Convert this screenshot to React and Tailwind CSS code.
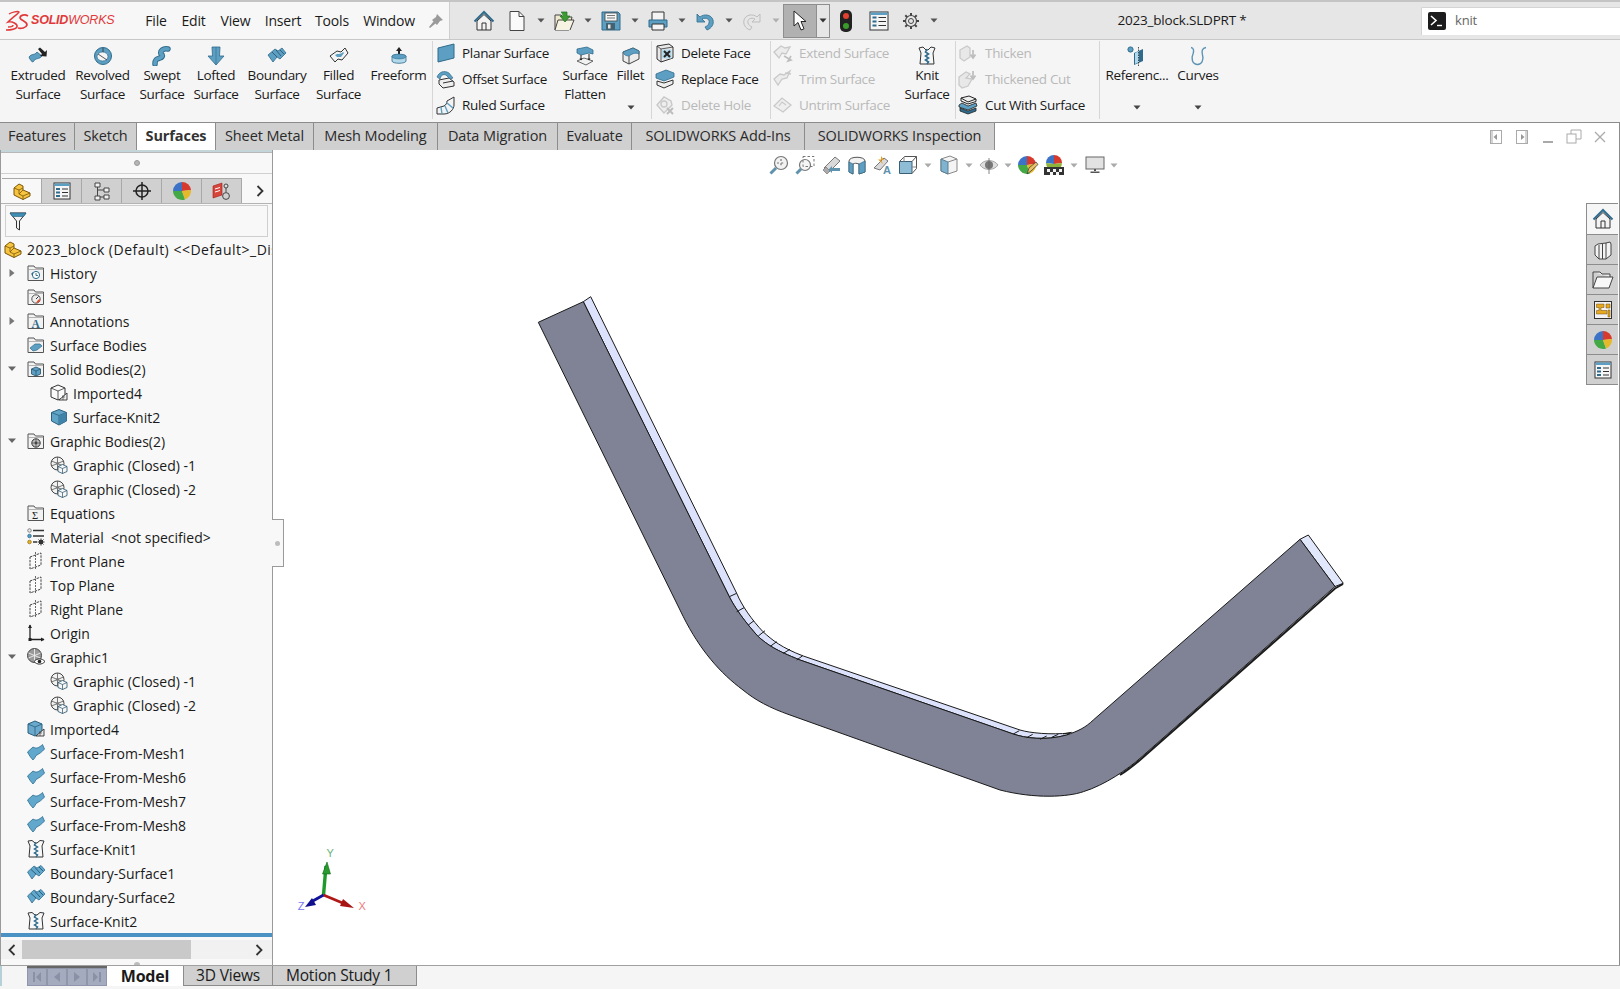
import React from "react";

const S = ({ w = 20, h = 20, children }) => (
  <svg width={w} height={h} viewBox={`0 0 ${w} ${h}`} className="shrink-0 block" fill="none">{children}</svg>
);

const B = "#5d9fc2", BD = "#2f6b8c", BL = "#b3d8ea", K = "#3c3c3c", G = "#c9c9c9", GD = "#bdbdbd";

const Caret = ({ c = "#555" }) => (
  <svg width="8" height="5" viewBox="0 0 8 5" className="shrink-0 block"><path d="M0.5 0.5H7.5L4 4.5Z" fill={c} /></svg>
);

const I = {
  extruded: (<S><path d="M1 11C4 7 6 10 9 6L14 10C11 14 8 11 5 16C4 16 2 14 1 11Z" fill={B} stroke={BD} strokeWidth=".8" /><path d="M10 3L12 1.5L17 6L19 4L18.5 10.5L12 10L14 8Z" fill="#222" /></S>),
  revolved: (<S><circle cx="10" cy="10" r="8.5" fill={B} stroke={BD} /><ellipse cx="9.5" cy="10.5" rx="5.5" ry="4.5" fill="#f5f5f5" stroke={BD} strokeWidth=".7" /><path d="M5 8L14 14M10 2V6" stroke="#333" strokeWidth=".8" /></S>),
  swept: (<S><path d="M3 18C3 13 5 13 8 12C11 11 11 9 9 8C8 5 11 2 16 3" stroke={BD} strokeWidth="5.5" strokeLinecap="round" /><path d="M3 18C3 13 5 13 8 12C11 11 11 9 9 8C8 5 11 2 16 3" stroke={B} strokeWidth="3.6" strokeLinecap="round" /></S>),
  lofted: (<S><path d="M6 1H14L13.5 10H18L10 19L2 10H6.5Z" fill={B} stroke={BD} strokeWidth=".8" /><path d="M10 1V19" stroke={BD} strokeWidth=".6" /></S>),
  boundary: (<S><path d="M1 9L8 3L11 5L15 2L19 7L13 13L10 11L6 16Z" fill={B} stroke={BD} strokeWidth=".8" /><path d="M5 6L10 11M9 4L14 10M13 4L17 8" stroke="#24516c" strokeWidth=".8" /></S>),
  filled: (<S><path d="M1 10L8 5L12 6L16 2L19 7L13 14L9 13L6 16Z" fill="#f4f4f4" stroke="#333" /><path d="M6 9C9 7 11 9 14 6L15 7L12 11L8 11Z" fill={B} /></S>),
  freeform: (<S><path d="M10 1L13 5H11V8H9V5H7Z" fill="#222" /><path d="M3 10C3 8 17 8 17 10V15C17 18 3 18 3 15Z" fill={BL} stroke={BD} strokeWidth=".8" /><ellipse cx="10" cy="10.5" rx="7" ry="2.4" fill={B} stroke={BD} strokeWidth=".6" /></S>),
  planar: (<S><path d="M2 5L18 1V15L2 19Z" fill={B} stroke={BD} /></S>),
  offset: (<S><path d="M3 11L13 9L18 13V17L7 19L3 15Z" fill="#eee" stroke="#333" /><path d="M7 14L17 12" stroke="#333" /><path d="M1 8C3 3 8 1 13 4L17 9L14 10L10 6C7 5 5 6 4 10Z" fill={B} stroke={BD} strokeWidth=".7" /></S>),
  ruled: (<S><path d="M1 13L8 11C10 10 11 8 11 6L18 2V10C18 14 14 19 8 19H1Z" fill="#f3f3f3" stroke="#333" /><path d="M5 12L6 19M9 11L12 18M11 8L17 13" stroke={B} strokeWidth="1.4" /></S>),
  flatten: (<S><path d="M2 15L9 12L18 15L11 19Z" fill="#f2f2f2" stroke="#444" strokeWidth=".8" /><path d="M2 3L12 1L18 4V8L14 7L6 9L2 7Z" fill={B} stroke={BD} strokeWidth=".8" /><path d="M6 9V14M14 8V14" stroke="#222" /><path d="M4.5 12.5L6 14.5L7.5 12.5M12.5 12.5L14 14.5L15.5 12.5" fill="#222" /></S>),
  fillet: (<S><path d="M2 6L12 2L18 5V13L8 18L2 15Z" fill="#ececec" stroke="#444" /><path d="M8 10V18" stroke="#444" /><path d="M2 6L12 2L18 5V8C14 6 11 8 8 10C5 10 3 9 2 6Z" fill={B} stroke={BD} strokeWidth=".7" /></S>),
  delFace: (<S><path d="M2 3L14 1L18 4V15L6 19L2 16Z" fill="#e8e8e8" stroke="#333" /><path d="M6 6V19M6 6L18 4M2 3L6 6" stroke="#333" strokeWidth=".8" /><rect x="7" y="6.5" width="9.5" height="9" fill={BL} /><path d="M9 8L15 14M15 8L9 14" stroke="#222" strokeWidth="2" /></S>),
  repFace: (<S><path d="M1 5L11 1L19 4V8L9 12L1 9Z" fill={B} stroke={BD} strokeWidth=".8" /><path d="M2 12L9 14L18 11V15L9 19L2 16Z" fill="#eee" stroke="#333" /></S>),
  delHole: (<S><path d="M2 10L9 2L16 6L17 10L13 14L9 18Z" fill="#eee" stroke={G} strokeWidth="1.4" /><circle cx="9" cy="9" r="3" stroke={G} strokeWidth="1.4" /><path d="M12 13L18 19M18 13L12 19" stroke={GD} strokeWidth="2" /></S>),
  extend: (<S><path d="M1 9L8 3L12 5L17 4L13 11L9 10L6 15Z" fill="#ececec" stroke={G} strokeWidth="1.3" /><path d="M11 13L18 17L15 18L18 13" stroke={GD} strokeWidth="1.6" /></S>),
  trim: (<S><path d="M1 10L7 5L11 6L17 2L14 9L9 10L5 16Z" fill="#ececec" stroke={G} strokeWidth="1.3" /><path d="M12 4L18 5" stroke={G} strokeWidth="1.5" /></S>),
  untrim: (<S><path d="M1 11L9 3L18 10L10 17Z" fill="#eee" stroke={G} strokeWidth="1.3" /><path d="M6 11L9 7L13 10" stroke={G} strokeWidth="1.2" /></S>),
  knit: (<S><path d="M2 2L6 1L9 4H11L14 1L18 2L16 7L17 18H3L4 7Z" fill="#f6f6f6" stroke="#333" /><path d="M10 3L8.5 6L11.5 8L8.5 10L11.5 12L8.5 14L11.5 16L10 18" stroke={BD} strokeWidth="1.6" /></S>),
  thicken: (<S><path d="M2 7L9 3L12 5V14L6 18L2 15Z" fill="#e8e8e8" stroke={G} strokeWidth="1.3" /><path d="M15 7V14M12.5 11.5L15 15L17.5 11.5" stroke={GD} strokeWidth="1.7" /></S>),
  thickCut: (<S><path d="M1 8L8 3L12 5L8 9L14 10L10 17L4 19L1 16Z" fill="#e8e8e8" stroke={G} strokeWidth="1.3" /><path d="M15 2V9M12.5 6.5L15 10L17.5 6.5" stroke={GD} strokeWidth="1.7" /></S>),
  cutWith: (<S><path d="M3 3L11 1L18 4L10 7Z" fill="#eee" stroke="#222" /><path d="M3 3V6L10 9L18 6.5V4" stroke="#222" /><path d="M1 10L4 8L10 11L18 8L19 11L10 15L1 12Z" fill={B} stroke="#222" strokeWidth=".8" /><path d="M2 13L10 16L18 13V16L10 19L2 16Z" fill={BD} stroke="#222" strokeWidth=".8" /></S>),
  reference: (<S><circle cx="3.5" cy="3.5" r="2.6" fill={B} stroke={BD} /><path d="M7 7L16 3V15L7 19Z" fill={BD} /><path d="M8 7L12 5V16L8 18Z" fill={BL} /><path d="M11.5 1V20" stroke="#222" strokeWidth=".8" strokeDasharray="1.5 1" /></S>),
  curves: (<S><path d="M3 1.5C6 2 6 5 5 8C3 12 4 18 9 18.5C14 19 16 13 14.5 9C13.5 5 14 2 18 1.5" stroke="#5a93b5" strokeWidth="1.4" /></S>),
  home: (<S w={22} h={22}><path d="M1.5 11.5L11 2L20.5 11.5" stroke={BD} strokeWidth="2" /><path d="M4 11V20H18V11L11 4.5Z" fill="#f3f3f3" stroke="#333" /><path d="M9 20V13H13V20" stroke="#333" /></S>),
  newDoc: (<S w={18} h={22}><path d="M2 1.5H11L16 6.5V20.5H2Z" fill="#fafafa" stroke="#444" /><path d="M11 1.5V6.5H16" stroke="#444" /></S>),
  open: (<S w={22} h={22}><path d="M2 5H8L10 7H19L16 20H2Z" fill="#f0e9d0" stroke="#444" /><path d="M2 20L5 10H21L17 20" fill="#f7f3e2" stroke="#444" /><path d="M8 2L14 2L14 6L17 6L12 12L7 6L10 6" fill="#3e9a33" stroke="#1f6a1c" strokeWidth=".7" /></S>),
  save: (<S w={20} h={20}><path d="M1 1H17L19 3V19H1Z" fill={B} stroke={BD} /><rect x="4" y="2" width="12" height="8" fill="#f6f6f6" stroke="#444" strokeWidth=".8" /><path d="M6 4.5H14M6 7H14" stroke="#555" strokeWidth=".8" /><rect x="5" y="12" width="9" height="7" fill="#44616f" /><rect x="7" y="13.5" width="2.5" height="4" fill="#e8e8e8" /></S>),
  print: (<S w={20} h={20}><path d="M4 9V1H16V9" fill="#f4f4f4" stroke="#333" /><path d="M1 9H19V16H1Z" fill={B} stroke={BD} /><path d="M4 13H16V19H4Z" fill="#f4f4f4" stroke="#333" /></S>),
  undo: (<S w={20} h={20}><path d="M2 3L2 11L10 11L7 8C11 6 15 8 14 12C13.5 14 12 15 10 16L12 19C17 17 19 13 18 9C16.5 3.5 9 2.5 5 6Z" fill={B} stroke={BD} strokeWidth=".8" /></S>),
  redo: (<S w={20} h={20}><path d="M18 3L18 11L10 11L13 8C9 6 5 8 6 12C6.5 14 8 15 10 16L8 19C3 17 1 13 2 9C3.5 3.5 11 2.5 15 6Z" fill="#e6e6e6" stroke={GD} /></S>),
  cursor: (<S w={16} h={22}><path d="M2 1V16L6 12.5L9 20L12 18.8L9 11.5H14Z" fill="#fff" stroke="#222" /></S>),
  light: (<svg width="12" height="22" viewBox="0 0 12 22" className="shrink-0 block"><rect width="12" height="22" rx="5" fill="#222" /><circle cx="6" cy="6" r="3" fill="#e2412f" /><circle cx="6" cy="16" r="3" fill="#3a9a2b" /></svg>),
  list: (<S w={20} h={22}><rect x="1" y="2" width="18" height="18" fill="#f5f5f5" stroke="#333" /><path d="M1.5 2.5H18.5V5H1.5Z" fill={B} /><path d="M3.5 7.5H7.5M3.5 11.5H7.5M3.5 15.5H7.5" stroke={BD} strokeWidth="2.2" /><path d="M9.5 7.5H17M9.5 11.5H17M9.5 15.5H17" stroke="#333" /></S>),
  gear: (<S w={18} h={18}><circle cx="9" cy="9" r="5.5" stroke="#444" strokeWidth="1.2" /><circle cx="9" cy="9" r="2.5" stroke="#444" /><path d="M9 1V3.5M9 14.5V17M1 9H3.5M14.5 9H17M3.3 3.3L5.1 5.1M12.9 12.9L14.7 14.7M14.7 3.3L12.9 5.1M5.1 12.9L3.3 14.7" stroke="#444" strokeWidth="2" /></S>),
  zoomFit: (<S><circle cx="12" cy="8" r="6.5" fill="#f2f2f2" stroke="#777" strokeWidth="1.2" /><path d="M1.5 18.5L7 13" stroke="#5e92ad" strokeWidth="3" /><path d="M12 4V12M8 8H16" stroke="#777" strokeWidth="1.2" strokeDasharray="2 2.2" /></S>),
  zoomArea: (<S><circle cx="10" cy="10" r="5.5" fill="#f5f5f5" stroke="#777" strokeWidth="1.2" /><path d="M1.5 18.5L6 14" stroke="#5e92ad" strokeWidth="3" /><rect x="8" y="1.5" width="11" height="10" stroke="#777" strokeDasharray="2.5 2" /></S>),
  prevView: (<S><path d="M3 13L14 2L19 6L8 17Z" fill="#d9d9d9" stroke="#777" /><path d="M2 15L5 12L9 16L6 19Z" fill="#aaa" stroke="#777" strokeWidth=".7" /><path d="M19 13H11V11L7.5 14.5L11 18V16H19Z" fill="#5e92ad" /></S>),
  section: (<S><path d="M2 6C2 1 18 1 18 6V17L12 19V9C9 8 8 8 6 9V19L2 17Z" fill="#f2f2f2" stroke="#555" /><path d="M2 7V17L6 19V9ZM12 9V19L18 17V6Z" fill={B} stroke={BD} strokeWidth=".7" /></S>),
  dynamic: (<S><path d="M2 13L12 3L16 6L8 15Z" fill="#d9d9d9" stroke="#777" /><path d="M9 1L12 5H9L11 9L6 4.5H9Z" fill="#e49b26" /><text x="11" y="19" fontSize="11" fontWeight="700" fill="#5e92ad" fontFamily="Liberation Sans">A</text></S>),
  cubeView: (<S><path d="M1.5 6.5H14V18.5H1.5Z" fill="#8fbdd6" stroke="#3a6076" /><path d="M1.5 6.5L6.5 1.5H18.5V13.5L14 18.5M14 6.5L18.5 1.5" stroke="#555" /><path d="M6 6.5V2M14 12H18.5" stroke="#888" /></S>),
  display: (<S><path d="M2 4L11 1L18 4V16L9 19L2 16Z" fill="#f4f4f4" stroke="#888" /><path d="M2 4L9 7V19L2 16Z" fill="#7fb3cf" stroke="#5a7f92" /><path d="M9 7L18 4" stroke="#888" /></S>),
  eye: (<S><path d="M1 10C5 4 15 4 19 10C15 16 5 16 1 10Z" fill="#ddd" stroke="#aaa" /><circle cx="10" cy="10" r="4" fill="#777" /><path d="M10 3V19" stroke="#666" strokeWidth=".8" /></S>),
  ball: (<S><path d="M10 1A9 9 0 0 1 19 9L10 10Z" fill="#d7392c" /><path d="M10 1A9 9 0 0 0 1 10L10 10Z" fill="#3d73c6" /><path d="M1 10A9 9 0 0 0 13 18.4L10 10Z" fill="#44a845" /><path d="M13 18.4A9 9 0 0 0 19 9L10 10Z" fill="#e5b92a" /></S>),
  ballPen: (<S w={22} h={20}><path d="M10 1A9 9 0 0 1 19 9L10 10Z" fill="#d7392c" /><path d="M10 1A9 9 0 0 0 1 10L10 10Z" fill="#3d73c6" /><path d="M1 10A9 9 0 0 0 13 18.4L10 10Z" fill="#44a845" /><path d="M13 18.4A9 9 0 0 0 19 9L10 10Z" fill="#e5b92a" /><path d="M10 19L12 13L19 7L21 9.5L14 16Z" fill="#e9c16a" stroke="#333" strokeWidth=".7" /></S>),
  ballFloor: (<S w={22} h={20}><path d="M11 0A8 8 0 0 1 19 8L11 9Z" fill="#d7392c" /><path d="M11 0A8 8 0 0 0 3 8L11 9Z" fill="#3d73c6" /><path d="M3 8A8 8 0 0 0 19 8L11 9Z" fill="#8eb33a" /><rect x="1" y="12" width="20" height="8" fill="#333" /><path d="M4 14H7V17H4ZM10 14H13V17H10ZM16 14H19V17H16ZM7 17H10V20H7ZM13 17H16V20H13Z" fill="#f4f4f4" /></S>),
  monitor: (<S w={20} h={18}><rect x="1" y="1" width="18" height="12" fill="#e2e2e2" stroke="#666" /><path d="M9 13H11V15H9ZM5.5 15.5H14.5V17H5.5Z" fill="#555" /></S>),
  part: (<S w={18} h={18}><path d="M1 6L6 2L10 4L10 8L17 11V14L10 17.5L1 13Z" fill="#f6c43f" stroke="#7a5608" /><path d="M1 6L6 8V12M6 8L10 6M10 8L6 12L10 14L17 11M10 14V17.5" stroke="#7a5608" strokeWidth=".8" /></S>),
  filter: (<svg width="18" height="20" viewBox="0 0 18 20" className="shrink-0 block"><path d="M1 2H17L10.5 10V19L7.5 17V10Z" fill="#f3f3f3" stroke="#333" /><path d="M1 2H17L14.5 5.5H3.5Z" fill="#3f8eb5" stroke="#2c5f7c" strokeWidth=".6" /></svg>),
  propMgr: (<svg width="20" height="20" viewBox="0 0 20 20"><rect x="2" y="2" width="16" height="16" fill="#f6f6f6" stroke="#333" /><path d="M2.5 2.5H17.5V5H2.5Z" fill={B} /><path d="M4 8H8M4 11.5H8M4 15H8" stroke={BD} strokeWidth="2" /><path d="M10 8H16M10 11.5H16M10 15H16" stroke="#333" /></svg>),
  cfgMgr: (<svg width="20" height="20" viewBox="0 0 20 20"><path d="M3 2H8V6H3ZM3 15H8V19H3ZM12 7H17V11H12ZM12 14H17V18H12Z" fill="#f2f2f2" stroke="#444" /><path d="M5.5 6V15M5.5 9H12M8 16H12" stroke="#444" fill="none" /></svg>),
  target: (<svg width="20" height="20" viewBox="0 0 20 20" fill="none"><circle cx="10" cy="10" r="6" stroke="#222" strokeWidth="1.5" /><path d="M10 1V19M1 10H19" stroke="#222" strokeWidth="1.5" /></svg>),
  sim: (<svg width="20" height="20" viewBox="0 0 20 20" fill="none"><path d="M1 5L10 2V14L1 17Z" fill="#d8453c" stroke="#9a1f1a" strokeWidth=".6" /><path d="M3 8L8 6.5M3 11L8 9.5" stroke="#fff" /><circle cx="14" cy="5" r="2" fill="#ddd" stroke="#444" /><path d="M14 7V11" stroke="#444" /><circle cx="14" cy="15" r="3.4" stroke="#444" /></svg>),
  chev: (<svg width="8" height="12" viewBox="0 0 8 12"><path d="M1.5 1L6.5 6L1.5 11" stroke="#333" strokeWidth="1.8" fill="none" /></svg>),
  chevL: (<svg width="8" height="12" viewBox="0 0 8 12"><path d="M6.5 1L1.5 6L6.5 11" stroke="#333" strokeWidth="1.8" fill="none" /></svg>),
  books: (<svg width="20" height="20" viewBox="0 0 20 20" fill="none"><path d="M2 6L5 4L13 3L17 2L18 4L18 15L13 19H6L2 15Z" fill="#f3f3f3" stroke="#444" /><path d="M6 5V19M9.5 4V19M13 3V19" stroke="#444" /></svg>),
  folderOpen: (<svg width="22" height="20" viewBox="0 0 22 20" fill="none"><path d="M1 2H8L10 4H18V7" fill="#eee" stroke="#444" /><path d="M1 2V18H17L21 7H5L1 18" fill="#f8f8f8" stroke="#444" /></svg>),
  palette: (<svg width="20" height="20" viewBox="0 0 20 20"><rect x="1.5" y="1.5" width="17" height="17" fill="#f3f3f3" stroke="#333" /><path d="M3.5 4H11V7.5H8V10.5H14V14H3.5V10.5H6V7.5H3.5ZM13 4H17V8H13ZM15 10V17H17V10Z" fill="#e8a91f" stroke="#6a4a10" strokeWidth=".5" /></svg>),
};

const Big = ({ w, icon, a, b, caret }) => (
  <div className={`${w} flex flex-col items-center pt-[5px] shrink-0`}>
    <div className="h-[21px] flex items-center justify-center">{icon}</div>
    <div className="text-center leading-[19px] whitespace-nowrap">{a}</div>
    <div className="text-center leading-[19px] whitespace-nowrap h-[19px]">{b}</div>
    {caret ? <div className="mt-[1px]"><Caret c="#444" /></div> : null}
  </div>
);

const Small = ({ icon, label, off, gap }) => (
  <div className={`h-[26px] flex items-center whitespace-nowrap ${gap} ${off ? "text-[#b9b9b9]" : ""}`}>
    {icon}
    <span>{label}</span>
  </div>
);

const Sep = () => <div className="w-px h-[78px] mt-[1px] bg-[#d6d6d6] shrink-0" />;

const Ribbon = () => (
  <div className="h-[82px] bg-[#f5f5f5] flex text-[13.5px] tracking-[-0.3px] text-[#1a1a1a] pl-[5px] shrink-0">
    <Big w="w-[66px]" icon={I.extruded} a="Extruded" b="Surface" />
    <Big w="w-[63px]" icon={I.revolved} a="Revolved" b="Surface" />
    <Big w="w-[56px]" icon={I.swept} a="Swept" b="Surface" />
    <Big w="w-[52px]" icon={I.lofted} a="Lofted" b="Surface" />
    <Big w="w-[70px]" icon={I.boundary} a="Boundary" b="Surface" />
    <Big w="w-[53px]" icon={I.filled} a="Filled" b="Surface" />
    <Big w="w-[67px]" icon={I.freeform} a="Freeform" b="" />
    <Sep />
    <div className="w-[122px] pl-[3px] shrink-0">
      <Small gap="gap-[6px]" icon={I.planar} label="Planar Surface" />
      <Small gap="gap-[6px]" icon={I.offset} label="Offset Surface" />
      <Small gap="gap-[6px]" icon={I.ruled} label="Ruled Surface" />
    </div>
    <Big w="w-[60px]" icon={I.flatten} a="Surface" b="Flatten" />
    <Big w="w-[31px]" icon={I.fillet} a="Fillet" b="" caret />
    <div className="w-[5px] shrink-0" />
    <Sep />
    <div className="w-[118px] pl-[3px] shrink-0">
      <Small gap="gap-[6px]" icon={I.delFace} label="Delete Face" />
      <Small gap="gap-[6px]" icon={I.repFace} label="Replace Face" />
      <Small gap="gap-[6px]" off icon={I.delHole} label="Delete Hole" />
    </div>
    <Sep />
    <div className="w-[128px] pl-[2px] shrink-0">
      <Small gap="gap-[6px]" off icon={I.extend} label="Extend Surface" />
      <Small gap="gap-[6px]" off icon={I.trim} label="Trim Surface" />
      <Small gap="gap-[6px]" off icon={I.untrim} label="Untrim Surface" />
    </div>
    <Big w="w-[56px]" icon={I.knit} a="Knit" b="Surface" />
    <Sep />
    <div className="w-[143px] pl-[2px] shrink-0">
      <Small gap="gap-[7px]" off icon={I.thicken} label="Thicken" />
      <Small gap="gap-[7px]" off icon={I.thickCut} label="Thickened Cut" />
      <Small gap="gap-[7px]" icon={I.cutWith} label="Cut With Surface" />
    </div>
    <Sep />
    <Big w="w-[74px]" icon={I.reference} a="Referenc..." b="" caret />
    <Big w="w-[48px]" icon={I.curves} a="Curves" b="" caret />
  </div>
);

const TopBar = () => (
  <div className="h-[40px] flex border-t-2 border-b border-t-[#c4c4c4] border-b-[#c8c8c8] shrink-0 text-[#1a1a1a]">
    <div className="w-[450px] bg-[#f7f7f7] border-r border-[#cfcfcf] flex items-center pl-[5px] text-[14px] shrink-0">
      <div className="w-[133px] flex items-center shrink-0">
        <svg width="25" height="22" viewBox="0 0 25 22" className="shrink-0 block" fill="none">
          <path d="M4 4C7 2 13 1 14 2C14 3 7 8 3 12C7 11 13 14 12 17C10 20 3 20 1 20M3 17C6 17 8 16 8 15" stroke="#e1393a" strokeWidth="1.5" />
          <path d="M23 6C20 4 15 5 15 8C16 11 22 11 22 15C21 18 16 19 13 18" stroke="#e1393a" strokeWidth="1.7" />
        </svg>
        <span className="ml-[1px] font-['Liberation_Sans',sans-serif] text-[12.5px] italic text-[#e1393a] leading-none">
          <b>SOLID</b>WORKS
        </span>
      </div>
      <div className="w-[36px] text-center shrink-0">File</div>
      <div className="w-[39px] text-center shrink-0">Edit</div>
      <div className="w-[45px] text-center shrink-0">View</div>
      <div className="w-[50px] text-center shrink-0">Insert</div>
      <div className="w-[48px] text-center shrink-0">Tools</div>
      <div className="w-[66px] text-center shrink-0">Window</div>
      <svg width="16" height="16" viewBox="0 0 16 16" className="ml-[6px] shrink-0 block"><path d="M9 1L15 7L12 8L9 12L7.5 10.5L2 15L1 14L5.5 8.5L4 7L8 4Z" fill="#9a9a9a" /></svg>
    </div>
    <div className="flex-1 bg-[#e6e6e6] flex items-center pl-[22px] text-[14px] gap-[7.5px]">
      <div className="w-6 flex justify-center mr-[1.5px]">{I.home}</div>
      <div className="w-6 flex justify-center">{I.newDoc}</div>
      <Caret />
      <div className="w-6 flex justify-center">{I.open}</div>
      <Caret />
      <div className="w-6 flex justify-center">{I.save}</div>
      <Caret />
      <div className="w-6 flex justify-center">{I.print}</div>
      <Caret />
      <div className="w-6 flex justify-center">{I.undo}</div>
      <Caret />
      <div className="w-6 flex justify-center">{I.redo}</div>
      <Caret c="#b0b0b0" />
      <div className="-ml-[4px] flex h-[34px] border border-[#8e8e8e] shrink-0">
        <div className="w-[32px] bg-[#b1b1b1] flex items-center justify-center">{I.cursor}</div>
        <div className="w-[13px] flex items-center justify-center border-l border-[#8e8e8e]"><Caret c="#333" /></div>
      </div>
      <div className="w-[18px] flex justify-center -ml-[1px]">{I.light}</div>
      <div className="w-6 ml-[5px] flex justify-center">{I.list}</div>
      <div className="w-6 ml-[0px] flex justify-center">{I.gear}</div>
      <Caret />
      <div className="ml-[172px] whitespace-nowrap text-[13.5px]">2023_block.SLDPRT *</div>
      <div className="ml-auto w-[199px] h-[28px] bg-white border-t border-l border-[#d4d4d4] rounded-tl-[2px] flex items-center pl-[6px] shrink-0">
        <div className="w-[18px] h-[18px] bg-[#1c1c1c] rounded-[2px] flex items-center justify-center">
          <svg width="14" height="12" viewBox="0 0 14 12"><path d="M1 1L6 5.5L1 10" stroke="#fff" strokeWidth="1.6" fill="none" /><path d="M7 10.5H12" stroke="#fff" strokeWidth="1.4" /></svg>
        </div>
        <span className="ml-[9px] text-[13px] text-[#666]">knit</span>
      </div>
    </div>
  </div>
);

const tabs = [
  ["w-[75px]", "Features"], ["w-[62px]", "Sketch"], ["w-[79px]", "Surfaces", 1], ["w-[98px]", "Sheet Metal"],
  ["w-[124px]", "Mesh Modeling"], ["w-[120px]", "Data Migration"], ["w-[74px]", "Evaluate"],
  ["w-[173px]", "SOLIDWORKS Add-Ins"], ["w-[190px]", "SOLIDWORKS Inspection"],
];

const WinBtn = ({ children }) => <div className="w-[26px] flex justify-center items-center">{children}</div>;

const TabRow = () => (
  <div className="h-[28px] flex bg-white border-t border-r border-[#8c8c8c] shrink-0">
    {tabs.map(([w, t, on]) => (
      <div key={t} className={`${w} h-[28px] flex items-center justify-center border-r border-[#8c8c8c] whitespace-nowrap text-[14.5px] tracking-[-0.1px] pb-[2px] shrink-0 ${on ? "bg-white font-bold text-[#333]" : "bg-[#d0d0d0] text-[#2a2a2a] border-b"}`}>{t}</div>
    ))}
    <div className="ml-auto flex items-center pr-[6px]">
      <WinBtn><svg width="12" height="14" viewBox="0 0 12 14"><rect x=".5" y=".5" width="11" height="13" fill="none" stroke="#aaa" /><path d="M2 .5V13.5" stroke="#aaa" /><path d="M7 4V10L3.5 7Z" fill="#999" /></svg></WinBtn>
      <WinBtn><svg width="12" height="14" viewBox="0 0 12 14"><rect x=".5" y=".5" width="11" height="13" fill="none" stroke="#aaa" /><path d="M10 .5V13.5" stroke="#aaa" /><path d="M5 4V10L8.5 7Z" fill="#999" /></svg></WinBtn>
      <WinBtn><svg width="12" height="14" viewBox="0 0 12 14"><path d="M1 12H11" stroke="#aaa" strokeWidth="2" /></svg></WinBtn>
      <WinBtn><svg width="16" height="15" viewBox="0 0 16 15" fill="none"><rect x="1" y="5" width="9" height="9" stroke="#aaa" /><path d="M5 5V1H15V10H10" stroke="#aaa" /></svg></WinBtn>
      <WinBtn><svg width="12" height="12" viewBox="0 0 12 12"><path d="M1 1L11 11M11 1L1 11" stroke="#aaa" strokeWidth="1.3" /></svg></WinBtn>
    </div>
  </div>
);

const Folder = ({ children }) => (
  <svg width="18" height="18" viewBox="0 0 18 18" className="shrink-0 block" fill="none">
    <path d="M1 16.5V2H7L8.5 4H16.5V16.5Z" fill="#f2f2f2" stroke="#555" />
    <path d="M1 5.5H16.5" stroke="#999" strokeWidth=".7" />
    {children}
  </svg>
);

const MiniCube = ({ x = 0, y = 0, f = B }) => (
  <g transform={`translate(${x} ${y})`}>
    <path d="M1 3L5.5 1L10 3V8L5.5 10L1 8Z" fill={f} stroke="#234f68" strokeWidth=".8" />
    <path d="M1 3L5.5 5L10 3M5.5 5V10" stroke="#234f68" strokeWidth=".7" />
  </g>
);

const Wheel = () => (
  <>
    <circle cx="7.5" cy="7.5" r="6.5" fill="#f2f2f2" stroke="#444" />
    <path d="M7.5 1V14M1.5 5L13.5 10M1.5 10L13.5 5" stroke="#666" strokeWidth=".9" />
    <circle cx="7.5" cy="7.5" r="1.4" fill="#777" />
  </>
);

const ti = {
  history: (<Folder><circle cx="9" cy="11" r="3.6" fill="#fff" stroke={BD} /><path d="M9 9V11.5H11" stroke={BD} strokeWidth=".9" /><path d="M4 10L6 8V12Z" fill={BD} /></Folder>),
  sensors: (<Folder><circle cx="9" cy="11" r="4.2" fill="#eee" stroke="#555" /><path d="M9 11L11.5 8.5" stroke="#333" /><path d="M9 15A4 4 0 0 0 13 11L11 12Z" fill="#e14b2a" /></Folder>),
  annot: (<Folder><text x="4.5" y="15.5" fontSize="11.5" fontWeight="700" fontFamily="Liberation Serif" fill={BD}>A</text></Folder>),
  surfB: (<Folder><path d="M3 12L8 8L13 8L15 10L10 14L6 15Z" fill={B} stroke={BD} strokeWidth=".7" /></Folder>),
  solidB: (<Folder><MiniCube x={3.5} y={6} /></Folder>),
  graphB: (<Folder><circle cx="9" cy="11" r="4.2" fill="#bbb" stroke="#333" /><circle cx="9" cy="11" r="1.4" fill="#444" /><path d="M9 7V15M5 11H13" stroke="#444" strokeWidth=".6" /></Folder>),
  eqn: (<Folder><text x="5" y="15" fontSize="10.5" fontFamily="Liberation Serif" fill="#222">Σ</text></Folder>),
  imported: (<S w={18} h={18}><path d="M1 4L8 1L15 4V13L8 16L1 13Z" fill="#fafafa" stroke="#333" /><path d="M1 4L8 7L15 4M8 7V16" stroke="#333" strokeWidth=".8" /><path d="M9 16L17 9V16Z" fill="#eee" stroke="#333" strokeWidth=".9" /><path d="M12 13L15 13M13 11V16" stroke="#333" strokeWidth=".6" /></S>),
  cube: (<S w={18} h={18}><path d="M1.5 4.5L9 1.5L16.5 4.5V13L9 17L1.5 13Z" fill="#5fa3c7" stroke="#2a5f7d" /><path d="M1.5 4.5L9 7.5L16.5 4.5M9 7.5V17" stroke="#2a5f7d" strokeWidth=".8" /><path d="M9 7.5L16.5 4.5V13L9 17Z" fill="#3f83a8" /></S>),
  gclosed: (<S w={18} h={18}><Wheel /><MiniCube x={7} y={7.5} f="#f6f6f6" /></S>),
  material: (<S w={18} h={18}><circle cx="2.5" cy="2.5" r="1.8" fill="#e6e6e6" stroke="#666" strokeWidth=".7" /><circle cx="2.5" cy="8" r="1.8" fill="#4f9ed0" stroke="#2a5f7d" strokeWidth=".7" /><circle cx="2.5" cy="14" r="1.8" fill="#eab427" stroke="#8a6510" strokeWidth=".7" /><path d="M6 2.5H17M6 8H17M6 14H10" stroke="#333" strokeWidth="1.6" /><circle cx="14" cy="14" r="2.2" fill="#333" /><path d="M14 10.5V17.5M10.5 14H17.5M11.5 11.5L16.5 16.5M16.5 11.5L11.5 16.5" stroke="#333" strokeWidth="1" /></S>),
  plane: (<S w={18} h={18}><path d="M3 5L14 1V13L3 17Z" stroke="#444" strokeDasharray="2.5 1" fill="#fbfbfb" /><path d="M8.5 0V18" stroke="#444" strokeWidth=".8" strokeDasharray="2 1" /></S>),
  origin: (<S w={18} h={18}><path d="M3 1V15.5H17" stroke="#222" strokeWidth="1.3" /><path d="M1 4L3 0.5L5 4ZM14 13.5L17.5 15.5L14 17.5Z" fill="#222" /><rect x="1.5" y="14" width="3" height="3" fill="#222" /></S>),
  graphic1: (<S w={18} h={18}><circle cx="7.5" cy="7.5" r="7" fill="#9a9a9a" stroke="#444" /><path d="M7.5 1V14M1.5 5L13.5 10M1.5 10L13.5 5" stroke="#eee" strokeWidth=".9" /><path d="M7 13.5C10 10 15 10 18 13.5C15 17 10 17 7 13.5Z" fill="#fff" stroke="#333" /><circle cx="12.5" cy="13.5" r="1.8" fill="#222" /></S>),
  importedB: (<S w={18} h={18}><path d="M1 4L8 1L15 4V13L8 16L1 13Z" fill="#6aa9cc" stroke="#2a5f7d" /><path d="M1 4L8 7L15 4M8 7V16" stroke="#2a5f7d" strokeWidth=".8" /><path d="M9 16L17 9V16Z" fill="#e8e8e8" stroke="#333" strokeWidth=".9" /><path d="M12 13L15 13M13 11V16" stroke="#333" strokeWidth=".6" /></S>),
  mesh: (<S w={18} h={18}><path d="M0.5 8L6 3C9 5 12 4 15.5 0.5L17.5 5C15 8 12 10 9 11.5C8 14 7 15 6 16C4 14 2 11 0.5 8Z" fill="#62a8cc" stroke="#2f6d8f" strokeWidth=".8" /></S>),
  knit: (<S w={18} h={18}><path d="M1 1L5 .5L8 3H10L13 .5L17 1L15 6L16 17H2L3 6Z" fill="#f8f8f8" stroke="#333" /><path d="M9 2.5L7.5 5L10.5 7L7.5 9L10.5 11L7.5 13L10.5 15L9 17" stroke={BD} strokeWidth="1.5" /></S>),
  boundary: (<S w={18} h={18}><path d="M0.5 8L7 2L10 4L14 1.5L18 6L12 12L9 10L5 15Z" fill="#62a8cc" stroke="#2f6d8f" strokeWidth=".8" /><path d="M4 5.5L9 10M8 3.5L13 9M12 3L16 7" stroke="#1f4a62" strokeWidth=".8" /></S>),
};

const Tw = ({ open, closed }) => (
  <div className="w-[21px] flex justify-center shrink-0">
    {open ? <svg width="10" height="8" viewBox="0 0 10 8"><path d="M1 1.5H9L5 6Z" fill="#666" /></svg> : null}
    {closed ? <svg width="8" height="10" viewBox="0 0 8 10"><path d="M1.5 1V9L6.5 5Z" fill="#777" /></svg> : null}
  </div>
);

const rows = [
  ["History", ti.history, "c"], ["Sensors", ti.sensors], ["Annotations", ti.annot, "c"], ["Surface Bodies", ti.surfB],
  ["Solid Bodies(2)", ti.solidB, "o"], ["Imported4", ti.imported, "k"], ["Surface-Knit2", ti.cube, "k"],
  ["Graphic Bodies(2)", ti.graphB, "o"], ["Graphic (Closed) -1", ti.gclosed, "k"], ["Graphic (Closed) -2", ti.gclosed, "k"],
  ["Equations", ti.eqn], ["Material  <not specified>", ti.material], ["Front Plane", ti.plane], ["Top Plane", ti.plane],
  ["Right Plane", ti.plane], ["Origin", ti.origin], ["Graphic1", ti.graphic1, "o"],
  ["Graphic (Closed) -1", ti.gclosed, "k"], ["Graphic (Closed) -2", ti.gclosed, "k"], ["Imported4", ti.importedB],
  ["Surface-From-Mesh1", ti.mesh], ["Surface-From-Mesh6", ti.mesh], ["Surface-From-Mesh7", ti.mesh], ["Surface-From-Mesh8", ti.mesh],
  ["Surface-Knit1", ti.knit], ["Boundary-Surface1", ti.boundary], ["Boundary-Surface2", ti.boundary], ["Surface-Knit2", ti.knit],
];

const Tree = () => (
  <div className="flex-1 overflow-hidden text-[14px] tracking-[0px] text-[#1a1a1a]">
    <div className="h-6 flex items-center pl-[3px] gap-[5px] whitespace-pre tracking-[0.5px]">{I.part}<span>2023_block (Default) &lt;&lt;Default&gt;_Display State 1&gt;</span></div>
    {rows.map(([t, ic, k], i) =>
      k === "k" ? (
        <div key={i} className="h-6 flex items-center pl-[49px] gap-[5px] whitespace-pre">{ic}<span>{t}</span></div>
      ) : (
        <div key={i} className="h-6 flex items-center gap-[5px] whitespace-pre">
          <Tw open={k === "o"} closed={k === "c"} />{ic}<span>{t}</span>
        </div>
      )
    )}
  </div>
);

const Panel = () => (
  <div className="w-[273px] bg-[#f8f8f8] border-r border-l border-[#9a9a9a] flex flex-col shrink-0">
    <div className="h-[3px] bg-[#c4d6da] border-b border-[#b8b8b8] shrink-0" />
    <div className="h-[21px] border-b border-[#cfcfcf] flex items-center justify-center shrink-0">
      <div className="w-[6px] h-[6px] rounded-full bg-[#b5b5b5] border border-[#999]" />
    </div>
    <div className="h-[26px] mt-[4px] flex pl-[1px] shrink-0 border-b border-[#b3b3b3]">
      <div className="w-[40px] bg-[#f8f8f8] border-t border-r border-[#a8a8a8] flex items-center justify-center">{I.part}</div>
      <div className="w-[40px] bg-[#d0d0d0] border-t border-r border-[#a8a8a8] flex items-center justify-center">{I.propMgr}</div>
      <div className="w-[40px] bg-[#d0d0d0] border-t border-r border-[#a8a8a8] flex items-center justify-center">{I.cfgMgr}</div>
      <div className="w-[40px] bg-[#d0d0d0] border-t border-r border-[#a8a8a8] flex items-center justify-center">{I.target}</div>
      <div className="w-[40px] bg-[#d0d0d0] border-t border-r border-[#a8a8a8] flex items-center justify-center">{I.ball}</div>
      <div className="w-[40px] bg-[#d0d0d0] border-t border-r border-[#a8a8a8] flex items-center justify-center">{I.sim}</div>
      <div className="flex-1 flex items-center justify-center pl-[5px]">{I.chev}</div>
    </div>
    <div className="h-[32px] mx-[4px] mt-[1px] border border-[#cfcfcf] flex items-center pl-[3px] shrink-0 w-[263px]">{I.filter}</div>
    <Tree />
    <div className="h-[4px] bg-[#4b92c4] shrink-0" />
    <div className="h-[3px] shrink-0" />
    <div className="h-[19px] bg-[#f1f1f1] flex items-center shrink-0">
      <div className="w-[21px] flex justify-center">{I.chevL}</div>
      <div className="w-[169px] h-[19px] bg-[#c9c9c9]" />
      <div className="flex-1 flex justify-end pr-[9px]">{I.chev}</div>
    </div>
    <div className="h-[6px] shrink-0 flex justify-center items-end"><div className="w-[6px] h-[3px] rounded-t-full bg-[#bbb]" /></div>
  </div>
);

const Shape = () => {
  const ticks = [
    "M729.3 596.7L736.7 593.3", "M736.7 611.7L744 607.7", "M748.3 625L754 620.7", "M758.3 636L765 630.7",
    "M770.7 646L776.7 641.7", "M783.3 653.3L790 649.3", "M796.7 660L802.7 655.7", "M1013.3 734L1019.3 730.7",
    "M1026.7 737.7L1032.7 734.3", "M1040 739.3L1046.7 736", "M1051.7 737.3L1058.3 734.3", "M1063.3 734L1071.7 732.3",
  ];
  return (
    <svg className="absolute left-0 top-0 block" width="1347" height="815" viewBox="273 150 1347 815" fill="none">
      <path d="M583.3 301.7L590.7 296.7L736.7 593.3C742 606 752 620 763 631.7C772 640 782 648 803.3 656L1020 730C1030 733 1050 735 1070 733L1066.7 735C1045 741 1025 738 1013.3 734L800 660C775 650 768 645 758.3 636.7C745 622 735 608 729.3 596.7Z" fill="#dce2fb" stroke="#1a1a1a" strokeWidth="1" />
      <path d="M1300 539.3L1308.3 535L1343.3 583.3L1335 586.5Z" fill="#e2e8fc" stroke="#1a1a1a" strokeWidth="1" />
      <path d="M538.3 322.3L583.3 301.7L729.3 596.7C735 608 745 622 758.3 636.7C768 645 775 650 800 660L1013.3 734C1025 738 1045 741 1066.7 735C1078 731 1085 728 1093.3 720L1300 539.3L1335 586.5L1140 758.3C1128 769 1105 785 1083.3 791.7C1068 797 1035 799 1000 790L790 715C770 708 755 700 743 690C720 673 700 650 683.3 616.7Z" fill="#7f8395" stroke="#1a1a1a" strokeWidth="1" strokeLinejoin="round" />
      <path d="M1343 584L1335 588.5L1140 760C1134 765 1128 770 1120 775" stroke="#1c1c1c" strokeWidth="2" />
      {ticks.map((d) => <path key={d} d={d} stroke="#1a1a1a" strokeWidth="1" />)}
      <path d="M323.5 895L326 866" stroke="#1f9a2a" strokeWidth="3.4" />
      <path d="M327 862L322.5 874L330.5 874Z" fill="#2a9a30" stroke="#0f6a18" strokeWidth=".6" />
      <path d="M323.5 895L345 904" stroke="#b01818" strokeWidth="2.8" />
      <path d="M354 908L343 899L340 906Z" fill="#a81414" />
      <path d="M323.5 895L311 902" stroke="#12129a" strokeWidth="3" />
      <path d="M305 907L312 898L316 905Z" fill="#10108e" />
      <text x="330" y="857" textAnchor="middle" fontSize="11" fill="#6ab37a" fontFamily="Liberation Sans">Y</text>
      <text x="362" y="910" textAnchor="middle" fontSize="11" fill="#ee7a7a" fontFamily="Liberation Sans">X</text>
      <text x="301" y="910" textAnchor="middle" fontSize="11" fill="#7a7aee" fontFamily="Liberation Sans">Z</text>
    </svg>
  );
};

const VBtn = ({ w, children }) => <div className={`${w} flex justify-center items-center shrink-0`}>{children}</div>;

const ViewBar = () => (
  <div className="absolute left-[493px] top-[5px] h-[20px] flex items-center">
    <VBtn w="w-[26px]">{I.zoomFit}</VBtn>
    <VBtn w="w-[26px]">{I.zoomArea}</VBtn>
    <VBtn w="w-[26px]">{I.prevView}</VBtn>
    <VBtn w="w-[25px]">{I.section}</VBtn>
    <VBtn w="w-[26px]">{I.dynamic}</VBtn>
    <VBtn w="w-[26px]">{I.cubeView}</VBtn>
    <VBtn w="w-[14px]"><Caret c="#aaa" /></VBtn>
    <VBtn w="w-[28px]">{I.display}</VBtn>
    <VBtn w="w-[11px]"><Caret c="#aaa" /></VBtn>
    <VBtn w="w-[30px]">{I.eye}</VBtn>
    <VBtn w="w-[8px]"><Caret c="#aaa" /></VBtn>
    <VBtn w="w-[32px]">{I.ballPen}</VBtn>
    <VBtn w="w-[20px]">{I.ballFloor}</VBtn>
    <VBtn w="w-[20px]"><Caret c="#aaa" /></VBtn>
    <VBtn w="w-[22px]">{I.monitor}</VBtn>
    <VBtn w="w-[16px]"><Caret c="#aaa" /></VBtn>
  </div>
);

const paneIcons = [I.home, I.books, I.folderOpen, I.palette, I.ball, I.propMgr];

const TaskPane = () => (
  <div className="absolute right-[1px] top-[53px] w-[32px] flex flex-col border-l border-t border-b border-[#8c8c8c]">
    {paneIcons.map((ic, i) => (
      <div key={i} className={`h-[30px] flex items-center justify-center ${i === 0 ? "bg-[#f6f6f6]" : "bg-[#d0d0d0] border-t border-[#8c8c8c]"}`}>{ic}</div>
    ))}
  </div>
);

const NavBtn = ({ d }) => (
  <div className="w-[20px] h-[18px] bg-[#a5abbf] border border-[#8f95aa] flex items-center justify-center">
    <svg width="12" height="12" viewBox="0 0 12 12"><path d={d} fill="#8a90a6" /></svg>
  </div>
);

const BottomTabs = () => (
  <div className="h-[24px] bg-[#f5f5f5] border-t border-[#a0a0a0] flex shrink-0 text-[#1a1a1a]">
    <div className="w-[2px] h-[20px] bg-[#b5d0d6] shrink-0" />
    <div className="w-[25px] shrink-0" />
    <div className="w-[80px] h-[20px] flex border-t-2 border-[#666] shrink-0">
      <NavBtn d="M2 1H4V11H2ZM10 1V11L5 6Z" />
      <NavBtn d="M9 1V11L3 6Z" />
      <NavBtn d="M3 1V11L9 6Z" />
      <NavBtn d="M8 1H10V11H8ZM2 1V11L7 6Z" />
    </div>
    <div className="w-[76px] h-[20px] bg-white flex items-center justify-center font-bold text-[16px] shrink-0">Model</div>
    <div className="w-[90px] h-[20px] bg-[#d0d0d0] border-x border-b border-[#8c8c8c] flex items-center justify-center text-[15.5px] shrink-0">3D Views</div>
    <div className="w-[144px] h-[20px] bg-[#d0d0d0] border-r border-b border-[#8c8c8c] flex items-center pl-[13px] text-[15.5px] shrink-0">Motion Study 1</div>
  </div>
);

export default function App() {
  return (
    <div className="w-[1620px] h-[989px] flex flex-col overflow-hidden bg-white font-['Open_Sans',sans-serif] tracking-[-0.2px]">
      <TopBar />
      <Ribbon />
      <TabRow />
      <div className="flex-1 flex min-h-0">
        <div className="relative z-10 flex shrink-0">
          <Panel />
          <div className="absolute left-[272px] top-[369px] w-[12px] h-[48px] bg-[#f8f8f8] border border-l-0 border-[#9a9a9a] flex items-center justify-center">
            <div className="w-[5px] h-[5px] rounded-full bg-[#bdbdbd]" />
          </div>
        </div>
        <div className="relative flex-1 bg-white border-r border-[#8c8c8c]">
          <Shape />
          <ViewBar />
          <TaskPane />
        </div>
      </div>
      <BottomTabs />
    </div>
  );
}
